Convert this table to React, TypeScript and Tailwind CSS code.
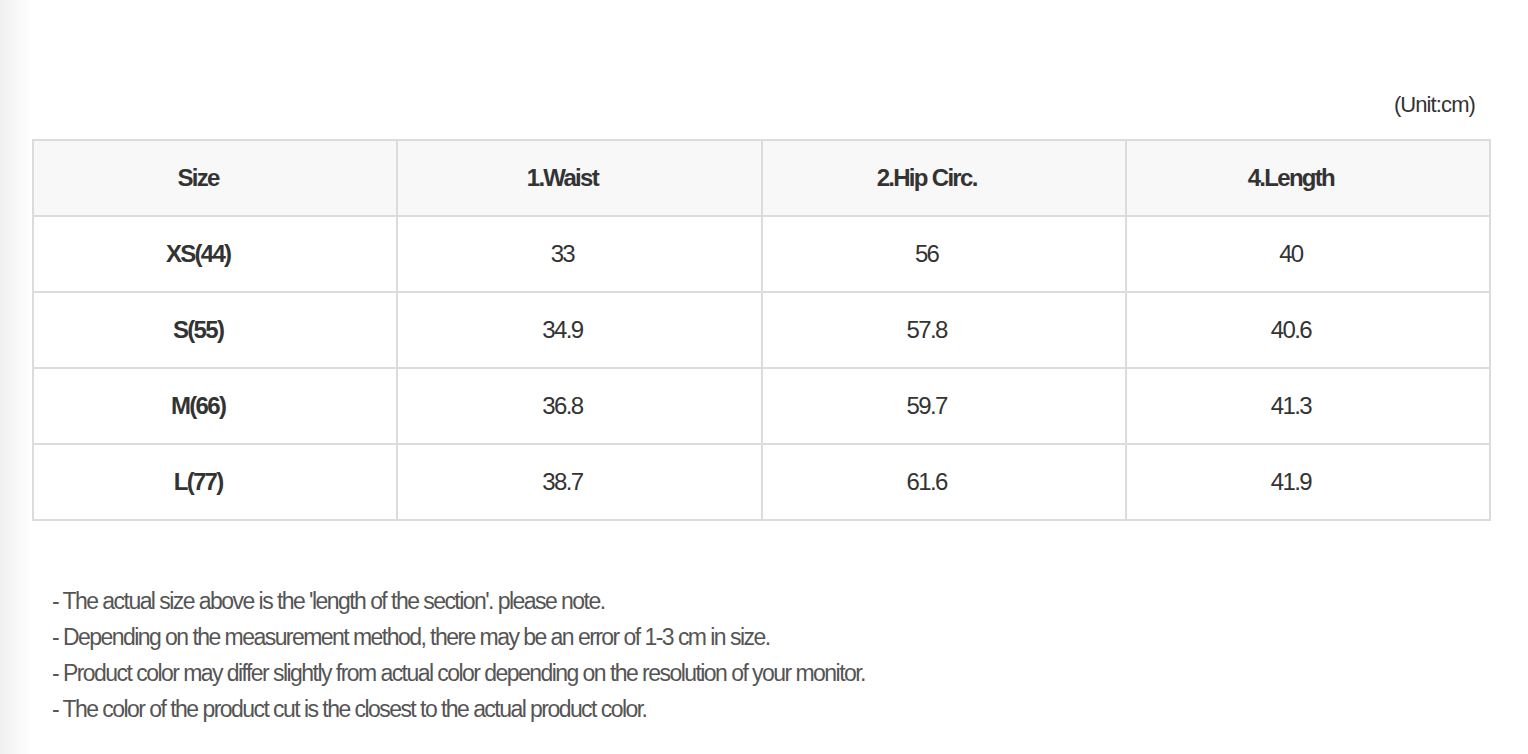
import React from "react";

const rows = [
  ["XS(44)", "33", "56", "40"],
  ["S(55)", "34.9", "57.8", "40.6"],
  ["M(66)", "36.8", "59.7", "41.3"],
  ["L(77)", "38.7", "61.6", "41.9"],
];

const notes = [
  "- The actual size above is the 'length of the section'. please note.",
  "- Depending on the measurement method, there may be an error of 1-3 cm in size.",
  "- Product color may differ slightly from actual color depending on the resolution of your monitor.",
  "- The color of the product cut is the closest to the actual product color.",
];

export default function App() {
  return (
    <div
      className="flex min-h-[754px] bg-white text-[#333]"
      style={{ fontFamily: '"Liberation Sans", Arial, sans-serif' }}
    >
      <div className="w-[32px] shrink-0 bg-gradient-to-r from-[#f0f0f0] to-white" />
      <div className="flex-1 pr-[37px]">
        <div className="pt-[93px] pr-[16px] text-right text-[22px] leading-[24px] tracking-[-0.9px] text-[#333]">
          (Unit:cm)
        </div>
        <table className="mt-[22px] w-full table-fixed border-collapse border-2 border-[#dcdcdc]">
          <thead>
            <tr className="h-[76px] bg-[#f8f8f8]">
              {["Size", "1.Waist", "2.Hip Circ.", "4.Length"].map((h) => (
                <th
                  key={h}
                  className="border-2 border-[#dcdcdc] pr-[34px] text-center text-[24px] font-bold tracking-[-1.7px] text-[#333]"
                >
                  {h}
                </th>
              ))}
            </tr>
          </thead>
          <tbody>
            {rows.map((r) => (
              <tr key={r[0]} className="h-[76px]">
                {r.map((c, i) => (
                  <td
                    key={i}
                    className={
                      i === 0
                        ? "border-2 border-[#dcdcdc] pr-[34px] text-center text-[24px] font-bold tracking-[-1.7px] text-[#333]"
                        : "border-2 border-[#dcdcdc] pr-[34px] text-center text-[24px] tracking-[-1.6px] text-[#333]"
                    }
                  >
                    {c}
                  </td>
                ))}
              </tr>
            ))}
          </tbody>
        </table>
        <div className="mt-[62px] pl-[20px]">
          {notes.map((n) => (
            <p key={n} className="text-[23px] leading-[36px] tracking-[-1.55px] text-[#555]">
              {n}
            </p>
          ))}
        </div>
      </div>
    </div>
  );
}
